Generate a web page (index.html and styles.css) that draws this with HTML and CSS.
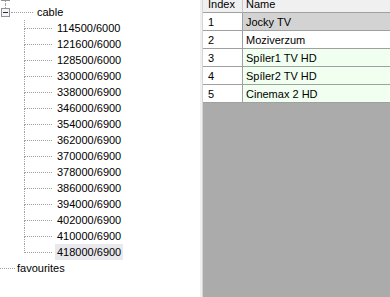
FILE: index.html
```html
<!DOCTYPE html>
<html lang="en">
<head>
  <meta charset="UTF-8" />
  <title>Channel list</title>
  <link rel="stylesheet" href="styles.css">
</head>
<body>
  <div class="window">
    <div class="tree-pane">
      <ul class="tree">
        <li class="root">
          <div class="row">
            <span class="gutter">
              <span class="stem"></span>
              <svg class="toggle" width="9" height="9" viewBox="0 0 9 9"><rect x="0.5" y="0.5" width="8" height="8" fill="#f4f4f4" stroke="#919191"/><line x1="2" y1="4.5" x2="7" y2="4.5" stroke="#1e2d4e"/></svg>
              <span class="stem on"></span>
            </span>
            <span class="twig"></span>
            <span class="label">satellites</span>
          </div>
        </li>
        <li class="root">
          <div class="row">
            <span class="gutter">
              <span class="stem on"></span>
              <svg class="toggle" width="9" height="9" viewBox="0 0 9 9"><rect x="0.5" y="0.5" width="8" height="8" fill="#f4f4f4" stroke="#919191"/><line x1="2" y1="4.5" x2="7" y2="4.5" stroke="#1e2d4e"/></svg>
              <span class="stem"></span>
            </span>
            <span class="twig"></span>
            <span class="label">cable</span>
          </div>
          <ul class="children">
            <li class="leaf"><span class="elbow"></span><span class="label">114500/6000</span></li>
            <li class="leaf"><span class="elbow"></span><span class="label">121600/6000</span></li>
            <li class="leaf"><span class="elbow"></span><span class="label">128500/6000</span></li>
            <li class="leaf"><span class="elbow"></span><span class="label">330000/6900</span></li>
            <li class="leaf"><span class="elbow"></span><span class="label">338000/6900</span></li>
            <li class="leaf"><span class="elbow"></span><span class="label">346000/6900</span></li>
            <li class="leaf"><span class="elbow"></span><span class="label">354000/6900</span></li>
            <li class="leaf"><span class="elbow"></span><span class="label">362000/6900</span></li>
            <li class="leaf"><span class="elbow"></span><span class="label">370000/6900</span></li>
            <li class="leaf"><span class="elbow"></span><span class="label">378000/6900</span></li>
            <li class="leaf"><span class="elbow"></span><span class="label">386000/6900</span></li>
            <li class="leaf"><span class="elbow"></span><span class="label">394000/6900</span></li>
            <li class="leaf"><span class="elbow"></span><span class="label">402000/6900</span></li>
            <li class="leaf"><span class="elbow"></span><span class="label">410000/6900</span></li>
            <li class="leaf last"><span class="elbow"></span><span class="label selected">418000/6900</span></li>
          </ul>
        </li>
        <li class="root plain">
          <div class="row">
            <span class="twig short"></span>
            <span class="label">favourites</span>
          </div>
        </li>
      </ul>
    </div>

    <div class="splitter"></div>

    <div class="grid-pane">
      <table class="grid">
        <thead>
          <tr>
            <th class="col-index">Index</th>
            <th>Name</th>
          </tr>
        </thead>
        <tbody>
          <tr class="picked">
            <td class="col-index">1</td>
            <td class="name">Jocky TV</td>
          </tr>
          <tr>
            <td class="col-index">2</td>
            <td class="name">Moziverzum</td>
          </tr>
          <tr class="hd">
            <td class="col-index">3</td>
            <td class="name">Spíler1 TV HD</td>
          </tr>
          <tr class="hd">
            <td class="col-index">4</td>
            <td class="name">Spíler2 TV HD</td>
          </tr>
          <tr class="hd">
            <td class="col-index">5</td>
            <td class="name">Cinemax 2 HD</td>
          </tr>
        </tbody>
      </table>
    </div>
  </div>
</body>
</html>
```

FILE: styles.css
```css
body {
  margin: 0;
  font-family: 'Liberation Sans', Arial, sans-serif;
  font-size: 11px;
  color: #000;
  background-color: #fff;
}
.window {
  display: flex;
  width: 390px;
  height: 297px;
  overflow: hidden;
}

/* tree view */
.tree-pane {
  width: 200px;
  flex: none;
  background-color: #fff;
  overflow: hidden;
}
.tree,
.children {
  list-style: none;
  margin: 0;
  padding: 0;
}
.tree {
  margin-top: -12px;
}
.row,
.leaf {
  display: flex;
  align-items: center;
  height: 16px;
}
.gutter {
  display: flex;
  flex-direction: column;
  width: 9px;
  height: 16px;
  padding-left: 1px;
}
.stem {
  flex: 1;
  margin-left: 4px;
  border-left: 1px dotted transparent;
}
.stem.on {
  border-left-color: #a0a0a0;
}
.toggle {
  flex: none;
  display: block;
}
.twig {
  width: 22px;
  margin-left: 1px;
  border-top: 1px dotted #a0a0a0;
  align-self: flex-start;
  margin-top: 8px;
}
.twig.short {
  width: 15px;
  margin-left: 0;
}
.label {
  padding: 0 2px;
  line-height: 16px;
  white-space: nowrap;
}
.row .label {
  margin-left: 2px;
}
.plain .label {
  margin-left: 0;
}
.elbow {
  display: flex;
  flex-direction: column;
  width: 28px;
  height: 16px;
  margin-left: 24px;
}
.elbow::before {
  content: '';
  height: 9px;
  box-sizing: border-box;
  border-left: 1px dotted #a0a0a0;
  border-bottom: 1px dotted #a0a0a0;
}
.elbow::after {
  content: '';
  flex: 1;
  border-left: 1px dotted #a0a0a0;
}
.last .elbow::after {
  border-left-color: transparent;
}
.leaf .label {
  margin-left: 3px;
}
.label.selected {
  background-color: #e9e9ed;
}

/* splitter + data grid */
.splitter {
  width: 2px;
  flex: none;
  background-color: #f0f0f0;
}
.grid-pane {
  flex: 1;
  background-color: #ababab;
  border-left: 1px solid #d4d4d4;
  overflow: hidden;
}
.grid {
  width: 100%;
  margin-top: -5px;
  border-spacing: 0;
  table-layout: fixed;
}
.grid th,
.grid td {
  height: 17px;
  padding: 0 0 0 3px;
  text-align: left;
  font-weight: normal;
  white-space: nowrap;
  border-bottom: 1px solid #a0a0a0;
}
.grid th {
  background-color: #f0f0f0;
}
.grid td {
  background-color: #fff;
}
.grid .col-index {
  width: 34px;
  padding-left: 5px;
  border-right: 1px solid #a0a0a0;
}
.grid th.col-index {
  border-right-color: #c8c8c8;
}
.picked .name {
  background-color: #d3d3d3;
}
.hd .name {
  background-color: #f0fff0;
}
```
